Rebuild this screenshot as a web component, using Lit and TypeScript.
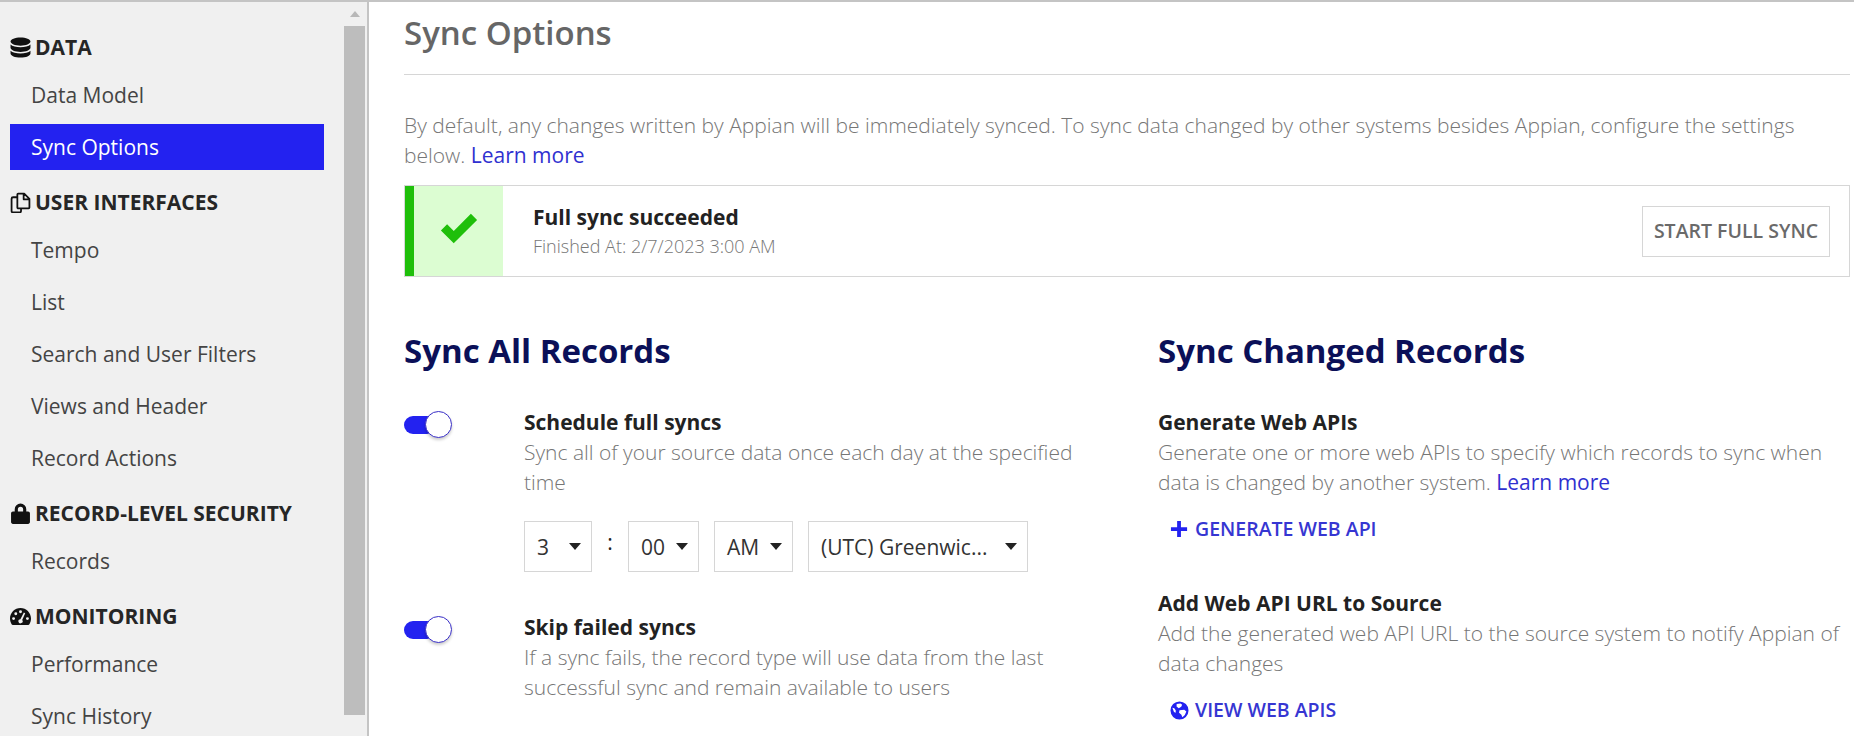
import { css, html, LitElement, svg } from 'lit';
import { customElement } from 'lit/decorators.js';

const icons = {
  database: svg`<path d="M10 .5C4.800.5.500 2.200.500 4.400S4.800 8.300 10 8.300s9.500-1.700 9.500-3.900S15.200.5 10 .5zM.5 7.200v3.100c0 2.200 4.300 3.900 9.500 3.900s9.500-1.700 9.500-3.900V7.200c-1.700 1.700-5.500 2.500-9.500 2.500S2.200 8.900.5 7.200zM.5 13.100v2.500c0 2.200 4.300 3.900 9.500 3.900s9.500-1.700 9.500-3.900v-2.500c-1.700 1.700-5.500 2.500-9.500 2.500s-7.800-.8-9.500-2.500z"/>`,
  files: svg`<path fill="none" stroke="currentColor" stroke-width="1.700" stroke-linejoin="round" d="M7.500 5H3a1.500 1.500 0 0 0-1.500 1.500V18A1.500 1.500 0 0 0 3 19.500h6a1.500 1.500 0 0 0 1.500-1.500v-2.500M7 2.300c0-.5.4-.8.800-.8h5.700l5 5v8.200c0 .4-.4.8-.8.8H7.800c-.4 0-.8-.4-.8-.8zM13 1.500V7h5.500"/>`,
  lock: svg`<path d="M4.500 8V6a5.500 5.500 0 0 1 11 0v2h1.700c1 0 1.800.8 1.800 1.800v8.400c0 1-.8 1.800-1.800 1.800H2.800c-1 0-1.800-.8-1.800-1.800V9.800C1 8.800 1.800 8 2.800 8zM7.500 8h5V6a2.500 2.500 0 0 0-5 0z"/>`,
  gauge: svg`<path fill-rule="evenodd" d="M10 2C4.500 2 0 6.500 0 12c0 2 .6 3.800 1.500 5.300.3.400.7.700 1.200.7h14.600c.5 0 .9-.3 1.200-.7 1-1.500 1.500-3.300 1.500-5.300 0-5.500-4.500-10-10-10zM10 4a1.400 1.400 0 1 1 0 2.800A1.400 1.400 0 0 1 10 4zM5.500 6a1.400 1.400 0 1 1 0 2.800 1.400 1.400 0 0 1 0-2.800zM3.400 10.600a1.400 1.400 0 1 1 0 2.800 1.400 1.400 0 0 1 0-2.800zM16.600 10.600a1.400 1.400 0 1 1 0 2.800 1.400 1.400 0 0 1 0-2.800zM13.200 6.200l1.300.7-2.900 6.400a2 2 0 1 1-1.700-.8z"/>`,
  check: svg`<path d="M13.500 28.500 2.500 17.500 7.800 12.300 13.500 18 28.200 3.300 33.500 8.500z"/>`,
  plus: svg`<path d="M7.500 1h4v6.500H18v4h-6.500V18h-4v-6.500H1v-4h6.500z"/>`,
  globe: svg`<path fill-rule="evenodd" d="M10 .5a9.500 9.500 0 1 0 0 19 9.500 9.500 0 0 0 0-19zM7 3.200l4-.7 1.800 1.500-1 2.100-2.600 1.400-2.300-1.700zM10 9.700l5-.6 2.200 2-1.600 3.600-2.600 2.300-1-2.600-2.500-2zM2.500 7.200l2 .5 1.500 2v2.600l-1.800-.6z"/>`,
};

const icon = (shape: unknown, box = 20) =>
  html`<svg viewBox="0 0 ${box} ${box}" fill="currentColor" aria-hidden="true">${shape}</svg>`;

const nav = [
  { title: 'DATA', icon: icons.database, links: ['Data Model', 'Sync Options'] },
  {
    title: 'USER INTERFACES',
    icon: icons.files,
    links: ['Tempo', 'List', 'Search and User Filters', 'Views and Header', 'Record Actions'],
  },
  { title: 'RECORD-LEVEL SECURITY', icon: icons.lock, links: ['Records'] },
  { title: 'MONITORING', icon: icons.gauge, links: ['Performance', 'Sync History'] },
];

@customElement('app-root')
export class AppRoot extends LitElement {
  static override styles = css`
    :host {
      display: flex;
      height: 736px;
      box-sizing: border-box;
      overflow: hidden;
      border-top: 2px solid #c4c4c4;
      background: #fff;
      color: #222;
      font-family: 'Open Sans', 'Liberation Sans', sans-serif;
      font-size: 21px;
      line-height: 30px;
    }

    /* sidebar */
    .sidebar {
      flex: none;
      display: flex;
      width: 369px;
      box-sizing: border-box;
      padding-right: 2px;
      background: #f0f0f0;
      border-right: 2px solid #c4c4c4;
    }
    .nav {
      flex: none;
      width: 344px;
      box-sizing: border-box;
      padding: 30px 20px 0 10px;
    }
    .group + .group {
      margin-top: 17px;
    }
    .group-title {
      display: flex;
      align-items: center;
      gap: 4px;
      height: 30px;
      margin-bottom: 10px;
      font-weight: 700;
      color: #262626;
      white-space: nowrap;
    }
    .group-title svg {
      width: 21px;
      height: 21px;
      color: #111;
    }
    .link {
      height: 46px;
      line-height: 46px;
      padding-left: 21px;
      color: #444;
      white-space: nowrap;
    }
    .link + .link {
      margin-top: 6px;
    }
    .link.active {
      background: #2322f0;
      color: #fff;
    }
    .scroll {
      flex: none;
      display: flex;
      flex-direction: column;
      width: 21px;
    }
    .scroll-up {
      flex: none;
      height: 24px;
      display: flex;
      align-items: center;
      justify-content: center;
    }
    .scroll-up::before {
      content: '';
      border: 5px solid transparent;
      border-top: 0;
      border-bottom: 6px solid #b8b8b8;
    }
    .scroll-thumb {
      flex: none;
      height: 689px;
      background: #bdbdbd;
    }

    /* content */
    .main {
      flex: 1;
      min-width: 0;
      padding: 9px 4px 0 35px;
    }
    h1 {
      margin: 0 0 35px;
      padding-bottom: 19px;
      border-bottom: 1px solid #d6d6d6;
      font-size: 33px;
      line-height: 44px;
      font-weight: 600;
      color: #666;
    }
    .muted {
      font-weight: 300;
      color: #767676;
    }
    .intro {
      margin: 0 0 15px;
    }
    a {
      color: #3030d0;
      font-weight: 400;
      text-decoration: none;
    }

    .alert {
      display: flex;
      align-items: center;
      height: 92px;
      box-sizing: border-box;
      border: 1px solid #d6d6d6;
      padding-right: 19px;
    }
    .alert-mark {
      flex: none;
      align-self: stretch;
      width: 98px;
      box-sizing: border-box;
      border-left: 9px solid #1fbf0a;
      background: #dcfdd2;
      display: flex;
      align-items: center;
      justify-content: center;
      color: #1fbf0a;
    }
    .alert-mark svg {
      width: 42px;
      height: 42px;
    }
    .alert-text {
      flex: 1;
      padding-left: 30px;
    }
    .alert-title {
      font-weight: 700;
      line-height: 29px;
    }
    .alert-sub {
      font-size: 18px;
      line-height: 28px;
      font-weight: 300;
      color: #767676;
    }
    .btn {
      flex: none;
      height: 51px;
      width: 188px;
      box-sizing: border-box;
      border: 1px solid #d6d6d6;
      display: flex;
      align-items: center;
      justify-content: center;
      font-size: 19.500px;
      font-weight: 600;
      color: #6a6a6a;
      white-space: nowrap;
    }

    .columns {
      display: grid;
      grid-template-columns: 754px 1fr;
      margin-top: 52px;
    }
    h2 {
      margin: 0 0 35px;
      font-size: 33px;
      line-height: 44px;
      font-weight: 700;
      color: #0b1058;
    }
    .title {
      font-weight: 700;
      line-height: 29px;
      color: #222;
    }
    p {
      margin: 0;
    }

    .setting {
      display: flex;
      margin-bottom: 41px;
      width: 680px;
    }
    .toggle {
      flex: none;
      position: relative;
      width: 48px;
      height: 27px;
      margin: 3px 72px 0 0;
    }
    .toggle::before {
      content: '';
      position: absolute;
      left: 0;
      top: 5px;
      width: 32px;
      height: 18px;
      border-radius: 9px;
      background: #2322f0;
    }
    .toggle::after {
      content: '';
      position: absolute;
      right: 0;
      top: 0;
      width: 25px;
      height: 25px;
      border-radius: 50%;
      border: 1px solid #3a30c8;
      background: #fff;
      box-shadow: 0 2px 3px rgba(0, 0, 0, 0.2);
    }
    .time {
      display: flex;
      align-items: flex-start;
      margin-top: 24px;
    }
    .select {
      box-sizing: border-box;
      height: 51px;
      display: flex;
      align-items: center;
      justify-content: space-between;
      border: 1px solid #d6d6d6;
      padding: 0 10px 0 12px;
      color: #333;
      white-space: nowrap;
    }
    .select::after {
      content: '';
      border: 6.500px solid transparent;
      border-bottom: 0;
      border-top: 7px solid #222;
    }
    .colon {
      width: 36px;
      text-align: center;
      line-height: 42px;
    }
    .select + .select {
      margin-left: 15px;
    }

    .step {
      margin-bottom: 45px;
    }
    .action {
      display: flex;
      align-items: center;
      gap: 6px;
      height: 30px;
      margin: 17px 0 0 12px;
      color: #3636d2;
      font-size: 19.500px;
      font-weight: 600;
      white-space: nowrap;
    }
    .action svg {
      width: 19px;
      height: 19px;
      color: #2322f0;
    }
  `;

  private renderNav() {
    return nav.map(
      (group) => html`
        <div class="group">
          <div class="group-title">${icon(group.icon)}${group.title}</div>
          ${group.links.map(
            (link) =>
              html`<div class="link ${link === 'Sync Options' ? 'active' : ''}">${link}</div>`,
          )}
        </div>
      `,
    );
  }

  override render() {
    return html`
      <aside class="sidebar">
        <nav class="nav">${this.renderNav()}</nav>
        <div class="scroll">
          <div class="scroll-up"></div>
          <div class="scroll-thumb"></div>
        </div>
      </aside>
      <main class="main">
        <h1>Sync Options</h1>
        <p class="intro muted">
          By default, any changes written by Appian will be immediately synced. To sync data changed
          by other systems besides Appian, configure the settings below. <a>Learn more</a>
        </p>
        <div class="alert">
          <div class="alert-mark">${icon(icons.check, 36)}</div>
          <div class="alert-text">
            <div class="alert-title">Full sync succeeded</div>
            <div class="alert-sub">Finished At: 2/7/2023 3:00 AM</div>
          </div>
          <div class="btn">START FULL SYNC</div>
        </div>
        <div class="columns">
          <section>
            <h2>Sync All Records</h2>
            <div class="setting">
              <div class="toggle"></div>
              <div>
                <div class="title">Schedule full syncs</div>
                <p class="muted">Sync all of your source data once each day at the specified time</p>
                <div class="time">
                  <div class="select" style="width:68px">3</div>
                  <div class="colon">:</div>
                  <div class="select" style="width:71px">00</div>
                  <div class="select" style="width:79px">AM</div>
                  <div class="select" style="width:220px">(UTC) Greenwic...</div>
                </div>
              </div>
            </div>
            <div class="setting">
              <div class="toggle"></div>
              <div>
                <div class="title">Skip failed syncs</div>
                <p class="muted">
                  If a sync fails, the record type will use data from the last successful sync and
                  remain available to users
                </p>
              </div>
            </div>
          </section>
          <section>
            <h2>Sync Changed Records</h2>
            <div class="step">
              <div class="title">Generate Web APIs</div>
              <p class="muted">
                Generate one or more web APIs to specify which records to sync when data is changed
                by another system. <a>Learn more</a>
              </p>
              <div class="action">${icon(icons.plus)}GENERATE WEB API</div>
            </div>
            <div class="step">
              <div class="title">Add Web API URL to Source</div>
              <p class="muted">
                Add the generated web API URL to the source system to notify Appian of data changes
              </p>
              <div class="action">${icon(icons.globe)}VIEW WEB APIS</div>
            </div>
          </section>
        </div>
      </main>
    `;
  }
}
